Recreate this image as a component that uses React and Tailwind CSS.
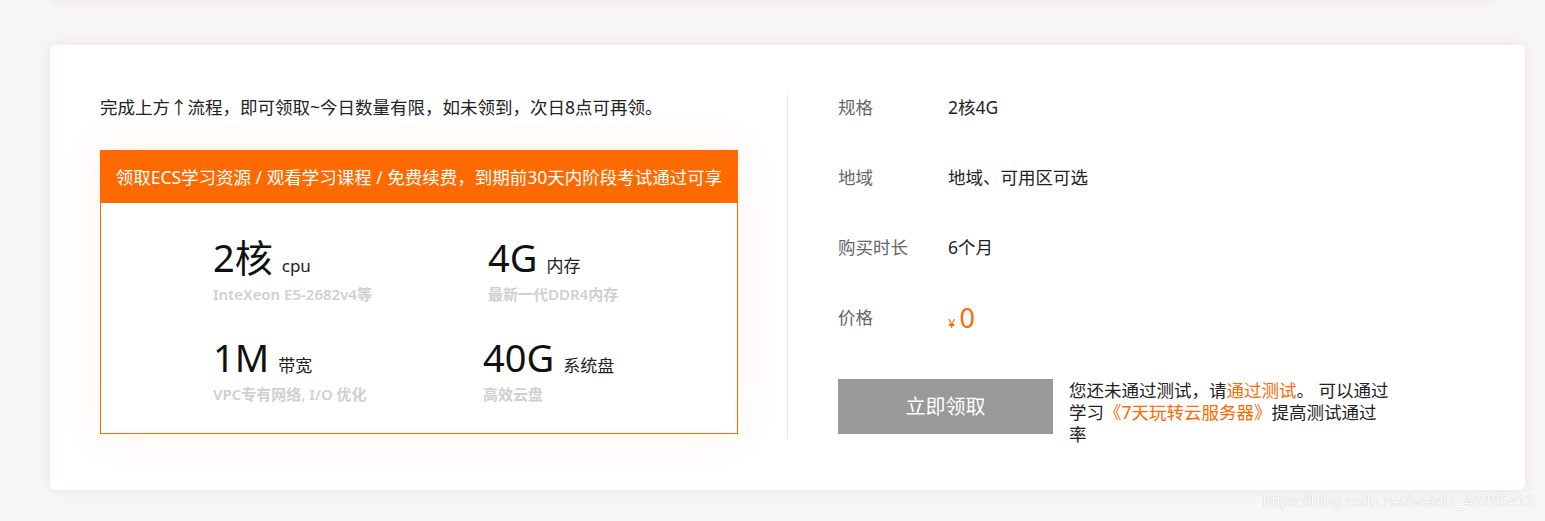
const font = { fontFamily: '"Noto Sans", "Noto Sans CJK SC", sans-serif' };

const Spec = ({ big, unit, sub, className = '' }) => (
	<div className={ className }>
		<div className="flex h-[38px] items-baseline">
			<span className="text-[38px] leading-[38px] text-[#111]">{ big }</span>
			<span className="ml-[9px] text-[17px] leading-none text-[#222]">{ unit }</span>
		</div>
		<div className="mt-[8px] h-[20px] text-[15px] leading-[20px] font-semibold text-[#d0d0d0]">{ sub }</div>
	</div>
);

const Row = ( { label, children } ) => (
	<div className="flex h-[70px] items-start">
		<div className="w-[110px] text-[17.5px] leading-[24px] text-[#666]">{ label }</div>
		<div className="text-[17.5px] leading-[24px] text-[#222]">{ children }</div>
	</div>
);

export default function App() {
	return (
		<div className="min-h-[521px] bg-[#f7f7f7] overflow-hidden" style={ font }>
			<div className="-mt-[20px] mx-[50px] h-[20px] rounded-b-md bg-white shadow-[0_0_12px_rgba(225,170,160,0.3)]" />
			<div className="ml-[50px] mr-[20px] mt-[45px] flex items-start rounded-md bg-white pt-[50px] pb-[45px] pl-[50px] shadow-[0_0_14px_rgba(225,170,160,0.3)]">
				<div className="w-[638px] shrink-0">
					<p className="text-[17.5px] leading-[24px] text-[#222]">
						完成上方↑流程，即可领取~今日数量有限，如未领到，次日8点可再领。
					</p>
					<div className="mt-[31px] border border-[#ff6a00] bg-white shadow-[0_0_40px_rgba(255,120,20,0.09)]">
						<div className="flex h-[52px] items-center justify-center bg-[#ff6a00] text-[17.5px] text-white">
							领取ECS学习资源 / 观看学习课程 / 免费续费，到期前30天内阶段考试通过可享
						</div>
						<div className="grid grid-cols-[275px_1fr] gap-y-[34px] pl-[112px] pt-[35px] pb-[29px]">
							<Spec big="2核" unit="cpu" sub="InteXeon E5-2682v4等" />
							<Spec big="4G" unit="内存" sub="最新一代DDR4内存" />
							<Spec big="1M" unit="带宽" sub="VPC专有网络, I/O 优化" />
							<Spec big="40G" unit="系统盘" sub="高效云盘" className="-ml-[5px]" />
						</div>
					</div>
				</div>
				<div className="ml-[49px] h-[344px] w-px shrink-0 bg-[#e8e8e8]" />
				<div className="pl-[50px]">
					<Row label="规格">2核4G</Row>
					<Row label="地域">地域、可用区可选</Row>
					<Row label="购买时长">6个月</Row>
					<div className="flex h-[74px] items-start">
						<div className="w-[110px] text-[17.5px] leading-[24px] text-[#666]">价格</div>
						<div className="-mt-[2px] flex items-baseline text-[#ff6a00]">
							<span className="text-[13px]">¥</span>
							<span className="ml-[4px] text-[27px] leading-[30px]">0</span>
						</div>
					</div>
					<div className="flex items-start">
						<button className="flex h-[55px] w-[215px] shrink-0 items-center justify-center bg-[#999] text-[20px] text-white">
							立即领取
						</button>
						<p className="ml-[16px] w-[321px] text-[17.5px] leading-[22px] text-[#222]">
							您还未通过测试，请<span className="text-[#ff6a00]">通过测试</span>。 可以通过学习<span className="text-[#ff6a00]">《7天玩转云服务器》</span>提高测试通过率
						</p>
					</div>
				</div>
			</div>
			<div className="mt-[3px] pr-[10px] text-right text-[16px] leading-[18px] text-white [text-shadow:0_0_1px_rgba(0,0,0,0.3)]" style={ { fontFamily: '"Liberation Sans", Arial, sans-serif' } }>
				https://blog.csdn.net/weixin_46285416
			</div>
		</div>
	);
}
